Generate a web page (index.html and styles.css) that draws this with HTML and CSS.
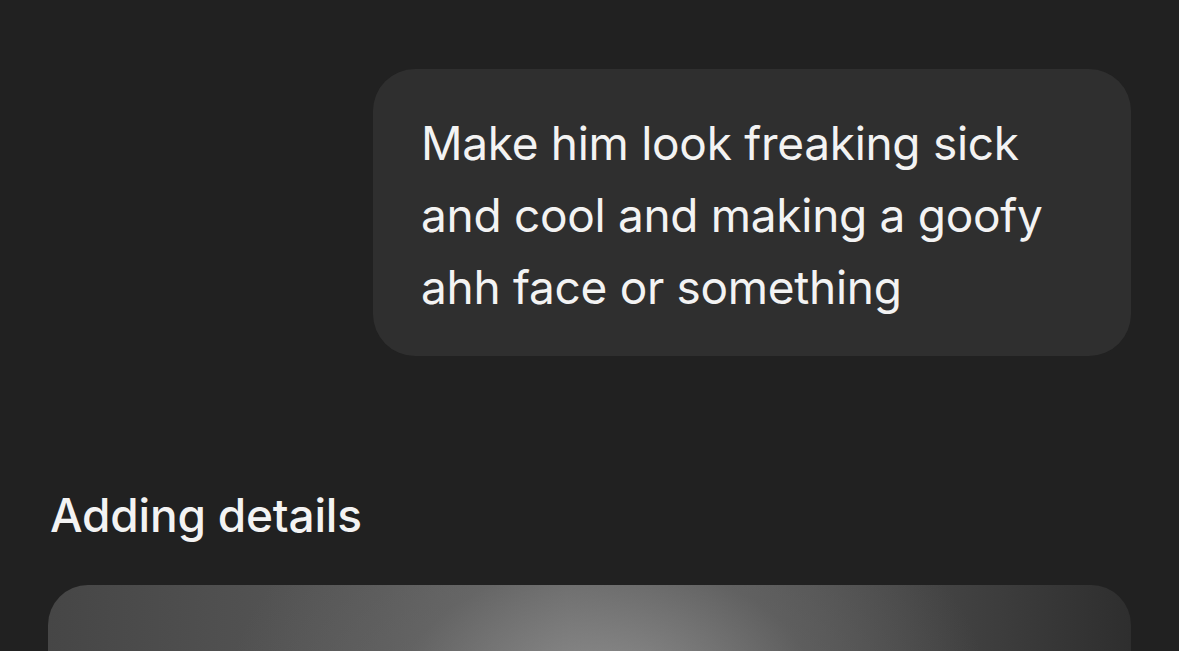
FILE: index.html
```html
<!DOCTYPE html>
<html>
<head>
<meta charset="utf-8">
<link rel="stylesheet" href="styles.css">
</head>
<body>
<main class="chat">
  <div class="row-user">
    <div class="bubble">Make him look freaking sick and cool and making a goofy ahh face or something</div>
  </div>
  <div class="status">Adding details</div>
  <div class="image-card"></div>
</main>
</body>
</html>
```

FILE: styles.css
```css
html, body {
  margin: 0;
  padding: 0;
  background: #212121;
  overflow: hidden;
}
.chat {
  width: 1179px;
  height: 651px;
  display: flex;
  flex-direction: column;
  padding: 69px 48px 0 48px;
  box-sizing: border-box;
  font-family: Inter, "Noto Sans", sans-serif;
  color: #f3f3f3;
  overflow: hidden;
}
.row-user {
  display: flex;
  justify-content: flex-end;
}
.bubble {
  width: 758px;
  box-sizing: border-box;
  background: #2f2f2f;
  border-radius: 42px;
  padding: 38px 48px 33px 48px;
  font-size: 46px;
  line-height: 72px;
  font-weight: 400;
  letter-spacing: -0.3px;
}
.status {
  margin-top: 133px;
  margin-left: 2px;
  font-size: 46px;
  line-height: 52px;
  font-weight: 500;
  letter-spacing: -0.2px;
}
.image-card {
  margin-top: 44px;
  flex: 1 1 auto;
  min-height: 0;
  border-radius: 40px 40px 0 0;
  background:
    radial-gradient(ellipse 380px 240px at 560px 110px, rgba(150,150,150,0.85), rgba(110,110,110,0.4) 55%, rgba(0,0,0,0) 100%),
    linear-gradient(90deg, #464646 0%, #585858 30%, #686868 48%, #505050 72%, #2e2e2e 100%);
}
```
